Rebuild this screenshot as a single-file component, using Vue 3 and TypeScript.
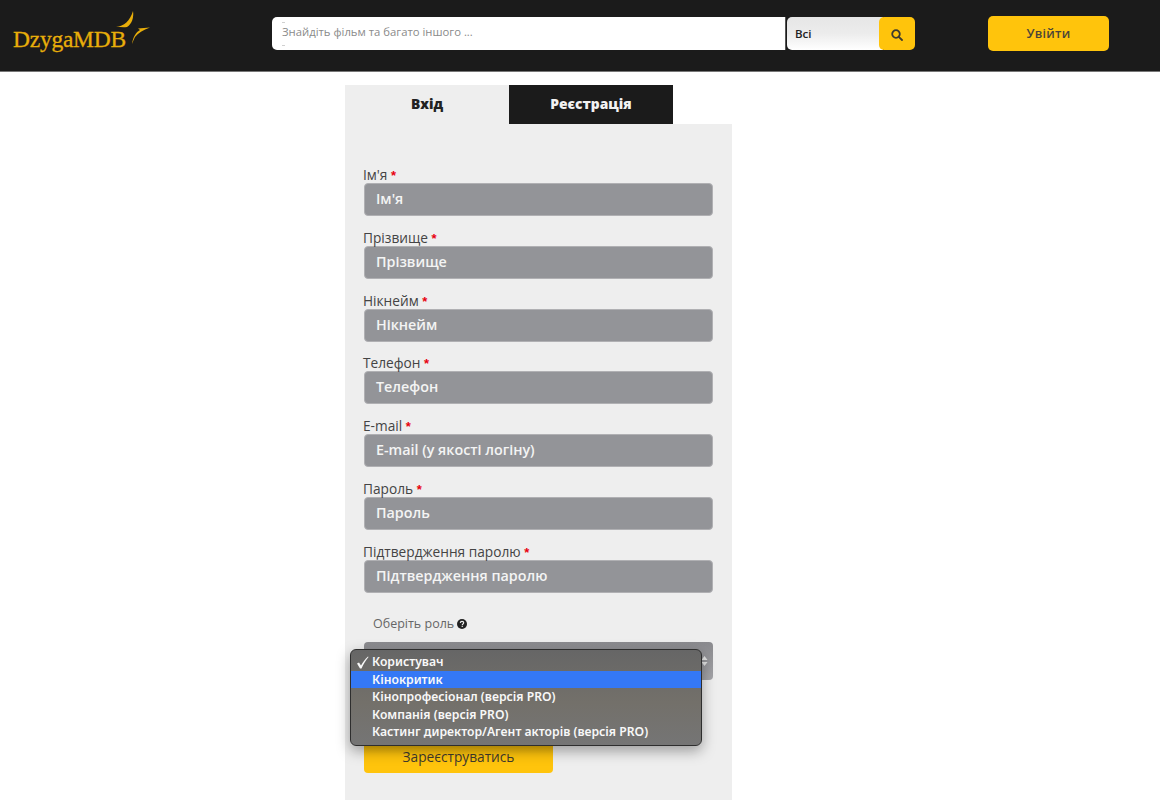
<script setup lang="ts">
const fields: { label: string; placeholder: string }[] = [
  { label: "Ім'я", placeholder: "Ім'я" },
  { label: 'Прізвище', placeholder: 'Прізвище' },
  { label: 'Нікнейм', placeholder: 'Нікнейм' },
  { label: 'Телефон', placeholder: 'Телефон' },
  { label: 'E-mail', placeholder: 'E-mail (у якості логіну)' },
  { label: 'Пароль', placeholder: 'Пароль' },
  { label: 'Підтвердження паролю', placeholder: 'Підтвердження паролю' },
]
const roles: string[] = [
  'Користувач',
  'Кінокритик',
  'Кінопрофесіонал (версія PRO)',
  'Компанія (версія PRO)',
  'Кастинг директор/Агент акторів (версія PRO)',
]
</script>

<template>
  <div class="page">
    <header class="topbar">
      <div class="logo">
        <span class="logo-text">DzygaMDB</span>
        <svg class="logo-mark" width="42" height="42" viewBox="0 0 42 42">
          <path d="M6 22C14 21 20 16 23 6C24 12 22 19 17 22C14 22.500 10 22 6 22Z" fill="#e8ae0a" />
          <path d="M22 39C23 32 26 27 30 25L28 23.500L40 22.500C33 25 28 28 25 32C24 34 23 36.500 22 39Z" fill="#e8ae0a" />
        </svg>
      </div>
      <div class="search">
        <div class="search-input">Знайдіть фільм та багато іншого ...</div>
        <div class="search-select">Всі</div>
        <button class="search-btn" aria-label="search">
          <svg width="12" height="12" viewBox="0 0 12 12" fill="none" stroke="#3d3a30" stroke-width="1.800">
            <circle cx="5" cy="5" r="3.800" />
            <path d="M7.800 7.800 11 11" stroke-linecap="round" />
          </svg>
        </button>
      </div>
      <button class="login">Увійти</button>
    </header>

    <main class="content">
      <div class="tabs">
        <div class="tab active">Вхід</div>
        <div class="tab">Реєстрація</div>
      </div>
      <form class="panel" @submit.prevent>
        <div v-for="f in fields" :key="f.label" class="field">
          <label class="label">{{ f.label }} <span class="req">*</span></label>
          <div class="input">{{ f.placeholder }}</div>
        </div>
        <div class="role-label">
          Оберіть роль
          <svg width="10" height="10" viewBox="0 0 10 10">
            <circle cx="5" cy="5" r="5" fill="#222" />
            <path d="M3.300 3.900C3.400 2.900 4.100 2.400 5 2.400c1 0 1.700.6 1.700 1.400 0 1.200-1.400 1.100-1.400 2.200" fill="none" stroke="#eee" stroke-width="1.200" />
            <rect x="4.600" y="6.700" width="1.300" height="1.200" fill="#eee" />
          </svg>
        </div>
        <div class="select-wrap">
          <div class="select">
            <svg class="arrows" width="7" height="10" viewBox="0 0 7 10">
              <path d="M3.500 0 6.500 4H.5zM3.500 10 .5 6h6z" fill="#e4e4e4" />
            </svg>
          </div>
          <ul class="menu">
            <li v-for="(r, i) in roles" :key="r" class="option" :class="{ hover: i === 1 }">
              <span class="check">
                <svg v-if="i === 0" width="13" height="13" viewBox="0 0 13 13">
                  <path d="M1 7.500 3 6.500 5 9.500C7 6 9 3 12 0.500L12.500 1C9.500 4.500 7.500 8 5.500 12.500H4Z" fill="#f8f8f8" />
                </svg>
              </span>{{ r }}
            </li>
          </ul>
        </div>
        <button class="submit">Зареєструватись</button>
      </form>
    </main>
  </div>
</template>

<style scoped>
.page {
  height: 800px;
  overflow: hidden;
  background: #fff;
  font-family: "Open Sans", sans-serif;
  color: #333;
}
.topbar {
  height: 71px;
  background: #1b1b1b;
  border-bottom: 1px solid #777;
  display: flex;
  align-items: flex-start;
  padding-left: 14px;
  margin-bottom: -1px;
}
.logo {
  width: 258px;
  position: relative;
  height: 71px;
}
.logo-text {
  display: block;
  margin-left: -1px;
  font-family: "Liberation Serif", serif;
  font-size: 23.500px;
  letter-spacing: -0.250px;
  color: #e8ae0a;
  margin-top: 25px;
  line-height: 28px;
  -webkit-text-stroke: 0.300px #e8ae0a;
}
.logo-mark {
  position: absolute;
  left: 96px;
  top: 5px;
}
.search {
  display: flex;
  width: 643px;
  height: 33px;
  margin-top: 17px;
}
.search-input {
  width: 514px;
  background: linear-gradient(#d0d0d0, #d0d0d0) 10px 5px / 3px 1px no-repeat,
    linear-gradient(#d0d0d0, #d0d0d0) 10px 28px / 3px 1px no-repeat, #fff;
  border-radius: 5px 0 0 5px;
  font-size: 11.300px;
  color: #8a8a8a;
  line-height: 30px;
  padding-left: 10px;
  box-sizing: border-box;
  border-right: 1px solid #555;
}
.search-select {
  width: 96px;
  margin-left: 1px;
  background: linear-gradient(#e6e6e6, #ececec 50%, #fff);
  border-radius: 5px 0 0 5px;
  font-size: 11.500px;
  font-weight: 600;
  color: #222;
  line-height: 33px;
  padding-left: 8px;
  box-sizing: border-box;
}
.search-btn {
  width: 36px;
  margin-left: -4px;
  background: #ffc40c;
  border: 0;
  border-radius: 5px;
  display: flex;
  align-items: center;
  justify-content: center;
  padding: 2px 0 0;
}
.login {
  width: 121px;
  height: 35px;
  margin-top: 16px;
  margin-left: 73px;
  background: #ffc40c;
  border: 0;
  border-radius: 5px;
  font-family: inherit;
  font-size: 12.500px;
  font-weight: 600;
  color: #4a4438;
  letter-spacing: 0.300px;
}
.content {
  width: 387px;
  margin-left: 345px;
  padding-top: 14px;
}
.tabs {
  display: flex;
  height: 39px;
}
.tab {
  width: 164px;
  background: #1b1b1b;
  color: #f2f2f2;
  font-size: 13.800px;
  font-weight: 800;
  text-align: center;
  line-height: 38px;
}
.tab.active {
  background: #eee;
  color: #222;
}
.panel {
  background: #eee;
  padding: 43px 19px 60px;
  height: 680px;
  box-sizing: border-box;
}
.field {
  margin-bottom: 13.830px;
}
.label {
  display: block;
  height: 16px;
  font-size: 13.700px;
  line-height: 16px;
  color: #444;
  font-weight: 500;
  margin-left: -1px;
}
.req {
  color: #e8000d;
  font-family: "Liberation Sans", sans-serif;
  font-size: 13px;
  font-weight: 700;
}
.input {
  width: 349px;
  height: 33px;
  box-sizing: border-box;
  background: #939498;
  border: 1px solid #b0b0b3;
  border-radius: 4px;
  color: #f4f4f4;
  font-size: 14.300px;
  font-weight: 600;
  line-height: 30px;
  padding-left: 11px;
}
.role-label {
  margin-top: 23px;
  margin-left: 9px;
  height: 16px;
  font-size: 12.500px;
  line-height: 16px;
  color: #666;
  display: flex;
  align-items: center;
  gap: 3px;
}
.select-wrap {
  position: relative;
  margin-top: 10px;
  margin-bottom: 62px;
}
.select {
  height: 38px;
  width: 349px;
  border-radius: 4px;
  background: linear-gradient(#8a8a8e, #a4a4a8);
  display: flex;
  align-items: center;
  justify-content: flex-end;
  padding-right: 5px;
  box-sizing: border-box;
}
.menu {
  position: absolute;
  left: -14px;
  top: 7px;
  width: 352px;
  height: 97px;
  box-sizing: border-box;
  margin: 0;
  padding: 3.500px 0;
  list-style: none;
  background: linear-gradient(#666, #73706a 55%, #757575);
  border: 1px solid #2e2e2e;
  border-radius: 6px;
  box-shadow: 0 5px 14px rgba(0, 0, 0, 0.35);
  font-family: "Noto Sans", sans-serif;
  font-size: 12.200px;
  font-weight: 600;
  color: #f8f8f8;
}
.option {
  height: 17.500px;
  line-height: 17px;
  display: flex;
  white-space: pre;
}
.option.hover {
  background: #3478f6;
}
.check {
  width: 21px;
  padding-left: 5px;
  box-sizing: border-box;
  display: flex;
  align-items: center;
}
.submit {
  display: block;
  width: 189px;
  height: 31px;
  padding: 0 0 2px;
  background: linear-gradient(#e8b40a, #ffc40c 40%);
  border: 0;
  border-radius: 4px;
  font-family: inherit;
  font-size: 13.700px;
  font-weight: 500;
  color: #3f3a2e;
}
</style>
